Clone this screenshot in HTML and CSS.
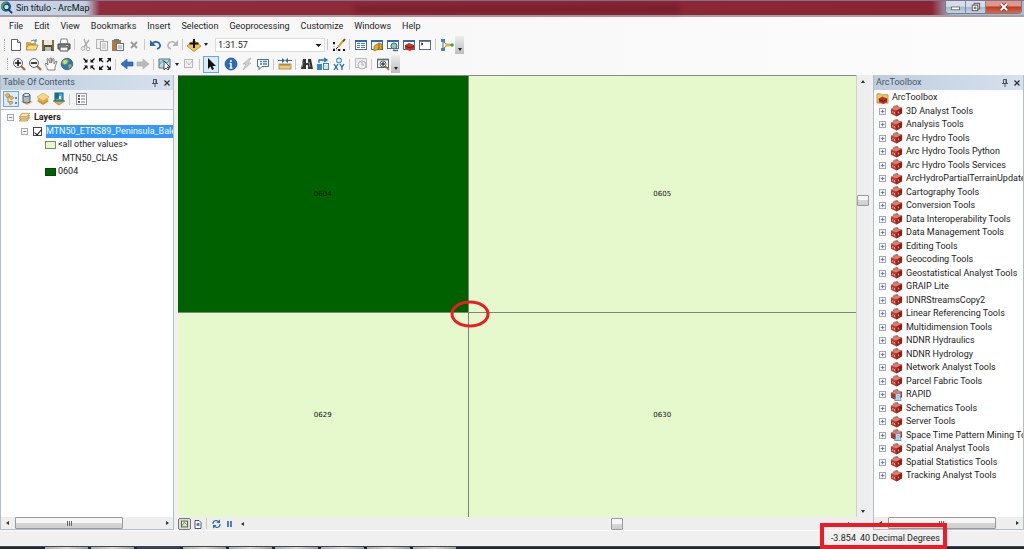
FILE: index.html
```
<!DOCTYPE html>
<html lang="en">
<head>
    <meta charset="UTF-8">
    <meta name="viewport" content="width=device-width, initial-scale=1.0">
    <title>Sin título - ArcMap</title>
    <link rel="stylesheet" href="styles.css">
</head>
<body>
    <svg class="defs">
        <symbol id="toolbox" viewBox="0 0 14 13">
            <path d="M1 4L7 1L13 3V9L7 12.500L1 9.500Z" fill="#c23a2d"/>
            <path d="M1 4L7 1L13 3L7 6Z" fill="#e07c69"/>
            <path d="M7 6L13 3V9L7 12.500Z" fill="#9c2119"/>
            <path d="M1 6.500L7 8.500L13 5.500" stroke="#6d1914" stroke-width=".8" fill="none"/>
            <path d="M4 3V1.500L8 .5V2" stroke="#555" stroke-width=".8" fill="none"/>
            <path d="M3 6.500v2M5 7.500v2M9 7v2" stroke="#f1c9c0"/>
        </symbol>
        <symbol id="script-box" viewBox="0 0 14 13">
            <path d="M1 4L7 1L13 3V9L7 12.500L1 9.500Z" fill="#b5342a"/>
            <path d="M1 4L7 1L13 3L7 6Z" fill="#e07c69"/>
            <path d="M4 3V1.500L8 .5V2" stroke="#555" stroke-width=".8" fill="none"/>
            <path d="M6 5h6l-1 3l1 4.500H5l1-3Z" fill="#d6eafa" stroke="#3c86c4" stroke-width=".8"/>
            <path d="M7 7h3M7 9h3M7 11h3" stroke="#5c9ed4" stroke-width=".8"/>
        </symbol>
        <symbol id="pin" viewBox="0 0 8 8">
            <path d="M2.500 .5h3v4M2.500 .5v4M1 4.500h6M4 5v3M5 1v3" stroke="#444" stroke-width=".9" fill="none"/>
        </symbol>
        <symbol id="cross" viewBox="0 0 8 8">
            <path d="M1.500 1.500L6.500 6.500M6.500 1.500L1.500 6.500" stroke="#333" stroke-width="1.300"/>
        </symbol>
        <symbol id="layers" viewBox="0 0 14 14">
            <path d="M1 9L7 6L13 9L7 13Z" fill="#c98f2b"/>
            <path d="M1 7L7 4L13 7L7 11Z" fill="#e3b04a"/>
            <path d="M1 5L7 1L13 5L7 9Z" fill="#f8d98a" stroke="#c9973c" stroke-width=".6"/>
        </symbol>
        <symbol id="group" viewBox="0 0 14 14">
            <path d="M1 10.500l3-4h9l-3 4Z" fill="#f5d692" stroke="#a9792a" stroke-width=".8"/>
            <path d="M1 8l3-4h9l-3 4Z" fill="#f5d692" stroke="#a9792a" stroke-width=".8"/>
            <path d="M1 5.500l3-4h9l-3 4Z" fill="#fbe7b6" stroke="#a9792a" stroke-width=".8"/>
        </symbol>
    </svg>

    <header class="titlebar">
        <svg class="app-icon" viewBox="0 0 14 14"><circle cx="6.500" cy="6" r="5.500" fill="#1d6b9e"/><path d="M2 3l4-2 2 3-3 1 1 3-2 2-3-4Z" fill="#58a84b"/><circle cx="7" cy="6.500" r="3" fill="#bfe4f5" stroke="#123b58" stroke-width="1.200"/><path d="M9 9l4 4" stroke="#123b58" stroke-width="2"/></svg>
        <h1>Sin título - ArcMap</h1>
        <span class="behind"></span>
        <div class="win-buttons">
            <button aria-label="Minimize"><svg viewBox="0 0 20 13"><rect x="5.500" y="6.500" width="9" height="3" fill="#fff" stroke="#555" stroke-width=".8"/></svg></button>
            <button aria-label="Restore"><svg viewBox="0 0 20 13"><rect x="8.500" y="2.500" width="6" height="6" fill="#ddd" stroke="#555"/><rect x="6.500" y="4.500" width="6" height="6" fill="#fff" stroke="#555"/><rect x="8.500" y="6.500" width="2" height="2" fill="#8aa4bb" stroke="#555" stroke-width=".6"/></svg></button>
            <button class="win-close" aria-label="Close"><svg viewBox="0 0 34 13"><path d="M14 3l7 7M21 3l-7 7" stroke="#643030" stroke-width="3.800"/><path d="M14 3l7 7M21 3l-7 7" stroke="#fff" stroke-width="2.200"/></svg></button>
        </div>
    </header>

    <nav class="menu">
        <button>File</button>
        <button>Edit</button>
        <button>View</button>
        <button>Bookmarks</button>
        <button>Insert</button>
        <button>Selection</button>
        <button>Geoprocessing</button>
        <button>Customize</button>
        <button>Windows</button>
        <button>Help</button>
    </nav>

    <div class="toolbar">
        <span class="grip"></span>
        <button aria-label="New"><svg viewBox="0 0 14 14"><path d="M2.500 1.500h6l3 3v8h-9Z" fill="#fff" stroke="#5c6570"/><path d="M8.500 1.500v3h3" fill="#dde5ee" stroke="#5c6570"/></svg></button>
        <button aria-label="Open"><svg viewBox="0 0 14 14"><path d="M1 4h4l1 1h5v7H1Z" fill="#d9a93c"/><path d="M3 7h10l-2 5H1Z" fill="#fbdc83" stroke="#a97a1c" stroke-width=".8"/><path d="M6 3q3-2 5 0M11 1v3H9" fill="none" stroke="#2b8ac6"/></svg></button>
        <button aria-label="Save"><svg viewBox="0 0 14 14"><path d="M1 2h12v11H1Z" fill="#514a35"/><rect x="3" y="2" width="8" height="5" fill="#ece9da"/><rect x="4" y="9" width="6" height="4" fill="#b9bcc0"/><path d="M2 2v10M12 2v10" stroke="#b29432"/></svg></button>
        <button aria-label="Print"><svg viewBox="0 0 14 14"><path d="M4 1h6l1 5H3Z" fill="#fff" stroke="#666" stroke-width=".8"/><path d="M1 6h12v5H1Z" fill="#80858b" stroke="#444"/><path d="M3 9h8v4H3Z" fill="#f7f7f7" stroke="#555"/><path d="M9 7.500h2" stroke="#f1c232"/></svg></button>
        <span class="sep"></span>
        <button aria-label="Cut"><svg viewBox="0 0 14 14"><path d="M5 1l3 8M10 2L5 9" stroke="#aaa" stroke-width="1.400"/><circle cx="4" cy="10.500" r="1.800" fill="none" stroke="#aaa"/><circle cx="9" cy="11" r="1.800" fill="none" stroke="#aaa"/></svg></button>
        <button aria-label="Copy"><svg viewBox="0 0 14 14"><rect x="1.500" y="1.500" width="7" height="9" fill="#eee" stroke="#b5b5b5"/><rect x="5.500" y="3.500" width="7" height="9" fill="#f4f4f4" stroke="#a8a8a8"/><path d="M7 6h4M7 8h4M7 10h4" stroke="#b5b5b5"/></svg></button>
        <button aria-label="Paste"><svg viewBox="0 0 14 14"><rect x="1" y="2" width="9" height="11" fill="#b7773b"/><rect x="3" y="1" width="5" height="3" fill="#777"/><rect x="5.500" y="5.500" width="7" height="7" fill="#fff" stroke="#5f7185"/><path d="M7 8h4M7 10h4" stroke="#7f9dbb"/></svg></button>
        <button aria-label="Delete"><svg viewBox="0 0 14 14"><path d="M4 4l6 6M10 4l-6 6" stroke="#9a9a9a" stroke-width="1.800"/></svg></button>
        <span class="sep"></span>
        <button aria-label="Undo"><svg viewBox="0 0 14 14"><path d="M3 6q3-4 7-1q3 4-2 6" fill="none" stroke="#2a64b4" stroke-width="1.800"/><path d="M1 2v6h6Z" fill="#2a64b4"/></svg></button>
        <button aria-label="Redo"><svg viewBox="0 0 14 14"><path d="M11 6q-3-4-7-1q-3 4 2 6" fill="none" stroke="#b5b5b5" stroke-width="1.600"/><path d="M13 2v6H7Z" fill="#b5b5b5"/></svg></button>
        <span class="sep"></span>
        <button aria-label="Add data"><svg viewBox="0 0 14 14"><path d="M0 8L7 2.500L14 8L7 13.500Z" fill="#f0c153" stroke="#a87620" stroke-width=".7"/><path d="M7 1v9M2.500 5.500h9" stroke="#111" stroke-width="2"/></svg></button>
        <button class="drop" aria-label="Add data options"></button>
        <select class="scale" aria-label="Map scale"><option>1:31.57</option></select>
        <span class="sep"></span>
        <button aria-label="Editor"><svg viewBox="0 0 14 14"><path d="M2 6v6h8" fill="none" stroke="#888" stroke-dasharray="1 1"/><path d="M1 4h2v2H1ZM1 11h2v2H1ZM6 11h2v2H6ZM11 11h2v2h-2Z" fill="#111"/><path d="M6 9L11 3" stroke="#d5a03a" stroke-width="2"/><path d="M11 3.500l2-2.500" stroke="#7b3a22" stroke-width="2"/><path d="M4 11l2-2" stroke="#222"/></svg></button>
        <span class="sep"></span>
        <button aria-label="Table of contents"><svg viewBox="0 0 14 14"><rect x="1.500" y="2.500" width="11" height="9" fill="#fff" stroke="#566c85"/><path d="M1 3h12" stroke="#2e69b0" stroke-width="2"/><path d="M3 5.500h3M3 7.500h3M3 9.500h3M7 5.500h4M7 7.500h4M7 9.500h4" stroke="#4480c0"/></svg></button>
        <button aria-label="Catalog"><svg viewBox="0 0 14 14"><rect x="1.500" y="2.500" width="11" height="9" fill="#f5f5f5" stroke="#566c85"/><path d="M1 3h12" stroke="#2e69b0" stroke-width="2"/><path d="M4 8l5-3v6l-5 2ZM9 5l3 1v5l-3 1Z" fill="#e2ab25" stroke="#896310" stroke-width=".6"/></svg></button>
        <button aria-label="Search"><svg viewBox="0 0 14 14"><rect x="1.500" y="2.500" width="11" height="8" fill="#fff" stroke="#566c85"/><path d="M1 3h12" stroke="#2e69b0" stroke-width="2"/><circle cx="8" cy="8" r="3" fill="#8cc7b8" stroke="#31659a"/><path d="M7 12.500h5" stroke="#536779" stroke-width="1.400"/></svg></button>
        <button aria-label="ArcToolbox"><svg viewBox="0 0 14 14"><rect x="1.500" y="2.500" width="11" height="9" fill="#fff" stroke="#566c85"/><path d="M1 3h12" stroke="#2e69b0" stroke-width="2"/><path d="M3 7l4-2 5 2v4l-4 2-5-2Z" fill="#c63328"/><path d="M3 8l5 2 4-2" stroke="#781713" fill="none"/></svg></button>
        <button aria-label="Python"><svg viewBox="0 0 14 14"><rect x="1.500" y="2.500" width="11" height="9" fill="#fff" stroke="#566c85"/><path d="M1 3h12" stroke="#4c6175" stroke-width="1.600"/><path d="M3 5l2 1-2 1" stroke="#222" fill="none"/></svg></button>
        <span class="sep"></span>
        <button aria-label="ModelBuilder"><svg viewBox="0 0 14 14"><path d="M3 3v8M3 3l4 4M3 11l4-4h5" fill="none" stroke="#666"/><rect x="1" y="1" width="4" height="3" fill="#3b86cb"/><rect x="1" y="10" width="4" height="3" fill="#3b86cb"/><rect x="5.500" y="5.500" width="4" height="3" fill="#dfb62b"/><circle cx="12" cy="7" r="1.800" fill="#48a23d"/></svg></button>
        <button class="overflow" aria-label="Toolbar options"></button>
    </div>

    <div class="toolbar tools">
        <span class="grip"></span>
        <button aria-label="Zoom in"><svg viewBox="0 0 14 14"><path d="M9 9l4 4" stroke="#a56f3a" stroke-width="2.400"/><circle cx="6" cy="6" r="4.500" fill="#f4f6f8" stroke="#666"/><path d="M6 3v6M3 6h6" stroke="#111" stroke-width="1.600"/></svg></button>
        <button aria-label="Zoom out"><svg viewBox="0 0 14 14"><path d="M9 9l4 4" stroke="#a56f3a" stroke-width="2.400"/><circle cx="6" cy="6" r="4.500" fill="#f4f6f8" stroke="#666"/><path d="M3 6h6" stroke="#111" stroke-width="1.600"/></svg></button>
        <button aria-label="Pan"><svg viewBox="0 0 14 14"><path d="M4 13L1 7l1-1 2 2L3 2l1-.5L6 6V1h1.500v5L9 1.500l1 .5v5l2-3 1 .5L11 10v3Z" fill="#fff" stroke="#666" stroke-width=".8"/></svg></button>
        <button aria-label="Full extent"><svg viewBox="0 0 14 14"><circle cx="7" cy="7" r="5.800" fill="#2f74bd" stroke="#294666" stroke-width=".6"/><path d="M3 3l4-1 2 2-2 3-3 1-2-2ZM8 8l3-1 1 2-3 3Z" fill="#8bb943"/><circle cx="5" cy="5" r="2" fill="#f7f6a6" opacity=".6"/></svg></button>
        <span class="sep blank"></span>
        <button aria-label="Fixed zoom in"><svg viewBox="0 0 14 14"><path d="M1.500 1.500l3 3M12.500 1.500l-3 3M1.500 12.500l3-3M12.500 12.500l-3-3" stroke="#111" stroke-width="1.400"/><path d="M5.500 2v3.500H2ZM8.500 2v3.500H12ZM5.500 12V8.500H2ZM8.500 12V8.500H12Z" fill="#111"/></svg></button>
        <button aria-label="Fixed zoom out"><svg viewBox="0 0 14 14"><path d="M2 2l3 3M12 2L9 5M2 12l3-3M12 12l-3-3" stroke="#111" stroke-width="1.400"/><path d="M1 1h4L1 5ZM13 1H9l4 4ZM1 13h4L1 9ZM13 13H9l4-4Z" fill="#111"/></svg></button>
        <span class="sep"></span>
        <button aria-label="Back"><svg viewBox="0 0 14 14"><path d="M1 7l6-5v3h6v4H7v3Z" fill="#2f73c4" stroke="#1e5295" stroke-width=".6"/></svg></button>
        <button aria-label="Forward"><svg viewBox="0 0 14 14"><path d="M13 7L7 2v3H1v4h6v3Z" fill="#bbb" stroke="#aaa" stroke-width=".6"/></svg></button>
        <span class="sep"></span>
        <button aria-label="Select features"><svg viewBox="0 0 14 14"><path d="M1 2h11v9H1Z" fill="#b9dce5" stroke="#58707e"/><path d="M1 8l4-5 4 3 3-4" stroke="#4794a7" fill="none"/><path d="M6 4v9l2-2 2 2 1-1-2-2h3Z" fill="#fff" stroke="#222" stroke-width=".8"/></svg></button>
        <button class="drop" aria-label="Selection options"></button>
        <button aria-label="Clear selection"><svg viewBox="0 0 14 14"><rect x="2.500" y="2.500" width="8" height="8" fill="#f0f0f0" stroke="#b8b8b8"/><path d="M4 4l3 4 3-4" stroke="#bbb" fill="none"/></svg></button>
        <span class="sep"></span>
        <button class="active" aria-label="Select elements"><svg viewBox="0 0 14 14"><path d="M4 1v11l2.500-2.500L8 13l2-1-1.500-3H12Z" fill="#111"/></svg></button>
        <button class="after-active" aria-label="Identify"><svg viewBox="0 0 14 14"><circle cx="7" cy="7" r="6" fill="#2b6cba" stroke="#1c4983" stroke-width=".7"/><path d="M7 3v2M7 6v5M5.500 6.500H7M5.500 11h3" stroke="#fff" stroke-width="1.500"/></svg></button>
        <button aria-label="Hyperlink"><svg viewBox="0 0 14 14"><path d="M10 1L3 7h3l-3 6 8-7H8l3-5Z" fill="#d0d0d0" stroke="#b0b0b0" stroke-width=".7"/></svg></button>
        <button aria-label="HTML popup"><svg viewBox="0 0 14 14"><path d="M1.500 2.500h11v7H6l-3 3v-3H1.500Z" fill="#fff" stroke="#4b6c82"/><path d="M4 4.500h2M7 4.500h4M4 7h2M7 7h4" stroke="#2e8bc3" stroke-width="1.400"/></svg></button>
        <span class="sep"></span>
        <button aria-label="Measure"><svg viewBox="0 0 14 14"><rect x="1" y="7" width="12" height="5" fill="#f0cc78" stroke="#9c7227" stroke-width=".7"/><path d="M3 7v2M5 7v2M7 7v2M9 7v2M11 7v2" stroke="#765216" stroke-width=".7"/><path d="M0 3.500h5M9 3.500h5" stroke="#246bb1"/><path d="M4 1l3 2.500L4 6ZM10 1L7 3.500 10 6Z" fill="#246bb1"/></svg></button>
        <span class="sep"></span>
        <button aria-label="Find"><svg viewBox="0 0 14 14"><path d="M3 2h3v4h2V2h3l2 10H8V8H6v4H1Z" fill="#333"/><path d="M3 5L2 10M9 5l1 5" stroke="#999"/></svg></button>
        <button aria-label="Find route"><svg viewBox="0 0 14 14"><rect x="1" y="7" width="5" height="6" fill="#3c88c7"/><rect x="7.500" y="6.500" width="5" height="6" fill="#fff" stroke="#3c88c7"/><path d="M8 9h4M8 11h4" stroke="#8ab9dd" stroke-width=".8"/><path d="M3 6V3h7M8 1l3 2-3 2" fill="none" stroke="#2571b5" stroke-width="1.300"/></svg></button>
        <button aria-label="Go to XY"><svg viewBox="0 0 14 14"><circle cx="7" cy="3.500" r="2.500" fill="#d5ecfa" stroke="#2c77b5"/><path d="M2 7l4 6M6 7l-4 6M8 7l2 3 2-3M10 10v3" stroke="#1e67a8" stroke-width="1.300" fill="none"/></svg></button>
        <span class="sep"></span>
        <button aria-label="Time slider"><svg viewBox="0 0 14 14"><rect x="1.500" y="1.500" width="11" height="9" fill="#eee" stroke="#bbb"/><circle cx="8" cy="8" r="4" fill="#f2f2f2" stroke="#b0b0b0"/><path d="M8 5v3h2" stroke="#aaa" fill="none"/></svg></button>
        <span class="sep"></span>
        <button aria-label="Viewer window"><svg viewBox="0 0 14 14"><rect x="1.500" y="2.500" width="11" height="8" fill="#eef3f6" stroke="#536779"/><path d="M1 2.500h12" stroke="#536779" stroke-width="1.600"/><circle cx="7" cy="7" r="3" fill="#fff" stroke="#444" stroke-width=".8"/><path d="M9 9l4 4" stroke="#9b6839" stroke-width="1.600"/><path d="M7 5v4M5 7h4" stroke="#111"/></svg></button>
        <button class="overflow" aria-label="Toolbar options"></button>
    </div>

    <main class="workspace">
        <aside class="panel toc">
            <div class="panel-head">
                <h2>Table Of Contents</h2>
                <button aria-label="Auto hide"><svg><use href="#pin"/></svg></button>
                <button aria-label="Close"><svg><use href="#cross"/></svg></button>
            </div>
            <div class="toc-tools">
                <button class="active" aria-label="List by drawing order"><svg viewBox="0 0 14 14"><path d="M4 4v6h4M4 4h3" stroke="#888" fill="none"/><path d="M1 3l3-2 2 2-3 3ZM5 5l3-1 2 2-3 2ZM5 10l3-1 1 2-3 2Z" fill="#edb64a" stroke="#a9771f" stroke-width=".5"/><path d="M11 6h2M11 11h2" stroke="#2c70b6" stroke-width="1.500"/></svg></button>
                <button aria-label="List by source"><svg viewBox="0 0 14 14"><path d="M1 10l6-2 6 2-6 3Z" fill="#edb64a"/><path d="M3 3v7q4 2 7 0V3Z" fill="#a9b9cb" stroke="#4c5c6f"/><ellipse cx="6.500" cy="3" rx="3.500" ry="1.500" fill="#e7edf4" stroke="#4c5c6f"/></svg></button>
                <button aria-label="List by visibility"><svg><use href="#layers"/></svg></button>
                <button aria-label="List by selection"><svg viewBox="0 0 14 14"><path d="M1 9l6-3 6 3-6 4Z" fill="#e3ad43" stroke="#9c6b20" stroke-width=".6"/><rect x="3" y="1" width="8" height="8" fill="#38b6d6" stroke="#175b78"/><path d="M3 1h4v5l-4 2Z" fill="#176b92"/><path d="M7 4h2v3H7Z" fill="#fff"/></svg></button>
                <span class="sep"></span>
                <button aria-label="Options"><svg viewBox="0 0 14 14"><rect x="2.500" y="1.500" width="10" height="11" fill="#fff" stroke="#8c98a4"/><path d="M4 4h2M4 7h2M4 10h2" stroke="#222" stroke-width="1.600"/><path d="M7 4h4M7 7h4M7 10h4" stroke="#777"/></svg></button>
            </div>
            <ul class="tree toc-tree">
                <li><button class="twist" aria-label="Collapse">−</button><svg class="node"><use href="#group"/></svg><b>Layers</b></li>
                <li class="level-1"><button class="twist" aria-label="Collapse">−</button><input type="checkbox" id="mtn50" checked><label for="mtn50">MTN50_ETRS89_Peninsula_Bale</label></li>
                <li class="level-2"><span class="swatch"></span>&lt;all other values&gt;</li>
                <li class="level-3">MTN50_CLAS</li>
                <li class="level-2"><span class="swatch dark"></span>0604</li>
            </ul>
            <div class="hscroll">
                <button class="left" aria-label="Scroll left"></button>
                <div class="track"><span class="thumb"></span></div>
                <button class="right" aria-label="Scroll right"></button>
            </div>
        </aside>

        <section class="view">
            <div class="map">
                <div class="sheet selected">0604
                    <svg class="mark" viewBox="0 0 40 28"><ellipse cx="20" cy="14" rx="18" ry="12" fill="none" stroke="#ed1c24" stroke-width="3"/></svg>
                </div>
                <div class="sheet">0605</div>
                <div class="sheet">0629</div>
                <div class="sheet">0630</div>
            </div>
            <div class="vscroll">
                <button class="up" aria-label="Scroll up"></button>
                <div class="track"><span class="thumb"></span></div>
                <button class="down" aria-label="Scroll down"></button>
            </div>
            <div class="view-bar">
                <button class="pressed" aria-label="Data view"><svg viewBox="0 0 12 12"><rect x="2.500" y="2.500" width="7" height="7" fill="#e8edc0" stroke="#444"/><path d="M3 8l3-4 3 3" stroke="#3a8b4b" fill="none"/></svg></button>
                <button aria-label="Layout view"><svg viewBox="0 0 12 12"><path d="M3.500 2.500h4l2 2v6h-6Z" fill="#fff" stroke="#556"/><rect x="5" y="5" width="3" height="3" fill="#4a87bd"/></svg></button>
                <span class="sep"></span>
                <button aria-label="Refresh"><svg viewBox="0 0 12 12"><path d="M2.500 6q0-3.500 3.500-3.500l2 1M9.500 6q0 3.500-3.500 3.500L4 8.500" fill="none" stroke="#2463ae" stroke-width="1.200"/><path d="M9.500 1.500v3.500H6ZM2.500 10.500V7H6Z" fill="#2463ae"/></svg></button>
                <button aria-label="Pause"><svg viewBox="0 0 12 12"><path d="M4.500 3v6M7.500 3v6" stroke="#2463ae" stroke-width="1.600"/></svg></button>
                <div class="hscroll">
                    <button class="left" aria-label="Scroll left"></button>
                    <div class="track"><span class="thumb"></span></div>
                    <button class="right" aria-label="Scroll right"></button>
                </div>
            </div>
        </section>

        <aside class="panel toolbox">
            <div class="panel-head">
                <h2>ArcToolbox</h2>
                <button aria-label="Auto hide"><svg><use href="#pin"/></svg></button>
                <button aria-label="Close"><svg><use href="#cross"/></svg></button>
            </div>
            <ul class="tree tools-tree">
                <li class="root"><svg class="node" viewBox="0 0 14 13"><path d="M1 2h4l1 1h7v9H1Z" fill="#edcc66" stroke="#a78228" stroke-width=".8"/><path d="M3 7l4-2 5 2v4l-4 2-5-2Z" fill="#bd3023"/><path d="M3 8l5 2 4-2" stroke="#641410" fill="none"/></svg>ArcToolbox</li>
                <li><button class="twist" aria-label="Expand">+</button><svg class="node"><use href="#toolbox"/></svg>3D Analyst Tools</li>
                <li><button class="twist" aria-label="Expand">+</button><svg class="node"><use href="#toolbox"/></svg>Analysis Tools</li>
                <li><button class="twist" aria-label="Expand">+</button><svg class="node"><use href="#toolbox"/></svg>Arc Hydro Tools</li>
                <li><button class="twist" aria-label="Expand">+</button><svg class="node"><use href="#toolbox"/></svg>Arc Hydro Tools Python</li>
                <li><button class="twist" aria-label="Expand">+</button><svg class="node"><use href="#toolbox"/></svg>Arc Hydro Tools Services</li>
                <li><button class="twist" aria-label="Expand">+</button><svg class="node"><use href="#toolbox"/></svg>ArcHydroPartialTerrainUpdate</li>
                <li><button class="twist" aria-label="Expand">+</button><svg class="node"><use href="#toolbox"/></svg>Cartography Tools</li>
                <li><button class="twist" aria-label="Expand">+</button><svg class="node"><use href="#toolbox"/></svg>Conversion Tools</li>
                <li><button class="twist" aria-label="Expand">+</button><svg class="node"><use href="#toolbox"/></svg>Data Interoperability Tools</li>
                <li><button class="twist" aria-label="Expand">+</button><svg class="node"><use href="#toolbox"/></svg>Data Management Tools</li>
                <li><button class="twist" aria-label="Expand">+</button><svg class="node"><use href="#toolbox"/></svg>Editing Tools</li>
                <li><button class="twist" aria-label="Expand">+</button><svg class="node"><use href="#toolbox"/></svg>Geocoding Tools</li>
                <li><button class="twist" aria-label="Expand">+</button><svg class="node"><use href="#toolbox"/></svg>Geostatistical Analyst Tools</li>
                <li><button class="twist" aria-label="Expand">+</button><svg class="node"><use href="#toolbox"/></svg>GRAIP Lite</li>
                <li><button class="twist" aria-label="Expand">+</button><svg class="node"><use href="#toolbox"/></svg>IDNRStreamsCopy2</li>
                <li><button class="twist" aria-label="Expand">+</button><svg class="node"><use href="#toolbox"/></svg>Linear Referencing Tools</li>
                <li><button class="twist" aria-label="Expand">+</button><svg class="node"><use href="#toolbox"/></svg>Multidimension Tools</li>
                <li><button class="twist" aria-label="Expand">+</button><svg class="node"><use href="#toolbox"/></svg>NDNR Hydraulics</li>
                <li><button class="twist" aria-label="Expand">+</button><svg class="node"><use href="#toolbox"/></svg>NDNR Hydrology</li>
                <li><button class="twist" aria-label="Expand">+</button><svg class="node"><use href="#toolbox"/></svg>Network Analyst Tools</li>
                <li><button class="twist" aria-label="Expand">+</button><svg class="node"><use href="#toolbox"/></svg>Parcel Fabric Tools</li>
                <li><button class="twist" aria-label="Expand">+</button><svg class="node"><use href="#script-box"/></svg>RAPID</li>
                <li><button class="twist" aria-label="Expand">+</button><svg class="node"><use href="#toolbox"/></svg>Schematics Tools</li>
                <li><button class="twist" aria-label="Expand">+</button><svg class="node"><use href="#toolbox"/></svg>Server Tools</li>
                <li><button class="twist" aria-label="Expand">+</button><svg class="node"><use href="#script-box"/></svg>Space Time Pattern Mining To</li>
                <li><button class="twist" aria-label="Expand">+</button><svg class="node"><use href="#toolbox"/></svg>Spatial Analyst Tools</li>
                <li><button class="twist" aria-label="Expand">+</button><svg class="node"><use href="#toolbox"/></svg>Spatial Statistics Tools</li>
                <li><button class="twist" aria-label="Expand">+</button><svg class="node"><use href="#toolbox"/></svg>Tracking Analyst Tools</li>
            </ul>
            <div class="hscroll">
                <button class="left" aria-label="Scroll left"></button>
                <div class="track"><span class="thumb"></span></div>
                <button class="right" aria-label="Scroll right"></button>
            </div>
        </aside>
    </main>

    <footer class="status">
        <div class="coords"><span>-3.854</span><span>40 Decimal Degrees</span></div>
    </footer>
    <div class="taskbar">
        <span class="start"></span>
        <span class="task"></span>
        <span class="task"></span>
        <span class="task off"></span>
        <span class="task"></span>
        <span class="task"></span>
        <span class="task"></span>
        <span class="task"></span>
        <span class="task"></span>
        <span class="task"></span>
    </div>
</body>
</html>
```

FILE: styles.css
```
* {
    box-sizing: border-box;
}
body {
    margin: 0;
    height: 100vh;
    display: flex;
    flex-direction: column;
    overflow: hidden;
    background-color: #f0f0f0;
    color: #1c1c1c;
    font-family: Roboto, "Open Sans", sans-serif;
    font-size: 9px;
    line-height: 13px;
}
button {
    padding: 0;
    border: none;
    background: none;
    color: inherit;
    font: inherit;
    flex: none;
}
svg {
    display: block;
}
.defs {
    position: absolute;
    width: 0;
    height: 0;
}

/* title bar */
.titlebar {
    flex: none;
    height: 17px;
    display: flex;
    align-items: flex-start;
    background: linear-gradient(90deg, #c9d8ea 0, #c0d0e2 86px, #8f2d3c 100px, #8b2432 91%, #a9bcd2 93%);
    border-top: 1px solid #85708e;
    border-bottom: 2px solid #a79da3;
}
.app-icon {
    width: 13px;
    height: 13px;
}
.titlebar h1 {
    margin: 0 0 0 3px;
    font-size: 9px;
    line-height: 14px;
    font-weight: 400;
    color: #111;
}
/* another window's caption showing through the glass */
.behind {
    width: 326px;
    height: 6px;
    margin: 5px 0 0 auto;
    background-color: #5f1522;
    filter: blur(3px);
    opacity: 0.6;
}
.win-buttons {
    display: flex;
    margin: 0 2px 0 265px;
    border: 1px solid #6d7c8c;
    border-top: none;
    border-radius: 0 0 4px 4px;
    overflow: hidden;
}
.win-buttons button {
    width: 20px;
    height: 12px;
    background: linear-gradient(#d3deea 45%, #a5b9cc 50%, #c5d5e4);
    border-right: 1px solid #7d8c9c;
}
.win-buttons svg {
    width: 100%;
    height: 12px;
}
.win-buttons .win-close {
    width: 35px;
    border: none;
    background: linear-gradient(#dd9a8c 40%, #bf3a24 50%, #d9694a);
}

/* menu and toolbars */
.menu {
    flex: none;
    height: 18px;
    display: flex;
    align-items: center;
    gap: 11px;
    padding-left: 9px;
    background: linear-gradient(90deg, #f5f5f5, #fcfcfc);
}
.toolbar {
    flex: none;
    height: 19px;
    display: flex;
    align-items: center;
    padding-left: 4px;
    background: linear-gradient(90deg, #f5f5f5, #fcfcfc);
}
.toolbar.tools {
    height: 21px;
    padding: 0 0 1px 7px;
}
.toolbar button {
    width: 16px;
    height: 17px;
    display: flex;
    align-items: center;
    justify-content: center;
}
.toolbar svg,
.toc-tools svg {
    width: 14px;
    height: 14px;
    flex: none;
}
.grip {
    width: 2px;
    height: 12px;
    margin-right: 2px;
    border-left: 1px dotted #aaa;
}
.sep {
    flex: none;
    width: 1px;
    height: 11px;
    margin: 0 3px 0 2px;
    background-color: #c9c9c9;
}
.sep.blank {
    visibility: hidden;
}
.toolbar .drop {
    width: 8px;
}
.drop::after,
.overflow::after {
    content: "";
    border: 2px solid transparent;
    border-top: 3px solid #222;
    border-bottom: none;
}
.toolbar .overflow {
    width: 9px;
    height: 18px;
    align-items: flex-end;
    padding-bottom: 3px;
    background: linear-gradient(#ededed, #bdbdbd);
}
.toolbar .active,
.toc-tools .active {
    border: 1px solid #66a7e8;
    background-color: #ddeaf8;
}
.toolbar .after-active {
    margin-left: 4px;
}
.scale {
    width: 110px;
    height: 14px;
    margin-left: 5px;
    padding: 0 2px;
    border: 1px solid #dcdcdc;
    border-radius: 0;
    appearance: none;
    background: linear-gradient(#222, #222) no-repeat right 5px top 5px / 1px 3px,
        linear-gradient(#222, #222) no-repeat right 4px top 5px / 3px 2px,
        linear-gradient(#222, #222) no-repeat right 3px top 5px / 5px 1px, #fff;
    color: inherit;
    font: inherit;
    line-height: 12px;
}

/* docked panels */
.workspace {
    flex: 1;
    min-height: 0;
    display: flex;
    gap: 4px;
}
.panel {
    flex: none;
    display: flex;
    flex-direction: column;
    border: 1px solid #b4bcc8;
    border-top: none;
    min-height: 0;
}
.toc {
    width: 174px;
}
.toolbox {
    width: 151px;
}
.panel-head {
    flex: none;
    height: 15px;
    display: flex;
    align-items: center;
    gap: 4px;
    padding: 0 2px;
    background: linear-gradient(90deg, #bfcddd, #d5e1ef);
}
.panel-head h2 {
    flex: 1;
    margin: 0;
    font-size: 9px;
    font-weight: 400;
    color: #46566a;
}
.panel-head svg {
    width: 8px;
    height: 8px;
}
.toc-tools {
    flex: none;
    height: 20px;
    display: flex;
    align-items: center;
    padding: 0 0 1px 2px;
    background-color: #f3f4f6;
    border-bottom: 1px solid #b8bec6;
}
.toc-tools button {
    width: 16px;
    height: 16px;
    display: flex;
    align-items: center;
    justify-content: center;
}
.tree {
    flex: 1;
    min-height: 0;
    margin: 0;
    padding: 1px 0 0;
    list-style: none;
    background-color: #fff;
    overflow: hidden;
    white-space: nowrap;
}
.tree li {
    height: 13px;
    display: flex;
    align-items: center;
}
.tree li:nth-child(even) {
    height: 14px;
}
.tools-tree li {
    padding-left: 5px;
}
.tools-tree .root {
    padding-left: 2px;
}
.twist {
    width: 7px;
    height: 7px;
    margin-right: 4px;
    border: 1px solid #a3abb5;
    background-color: #f8f8f8;
    color: #2b4e93;
    font-size: 8px;
    line-height: 5px;
}
.node {
    flex: none;
    width: 13px;
    height: 12px;
    margin-right: 3px;
}
.toc-tree {
    padding-left: 6px;
}
.toc-tree .level-1 {
    padding-left: 14px;
}
.toc-tree .level-2 {
    padding-left: 38px;
}
.toc-tree .level-3 {
    padding-left: 55px;
}
.tree input {
    flex: none;
    width: 9px;
    height: 9px;
    margin: 0 4px 0 1px;
    appearance: none;
    border: 1px solid #444;
    background-color: #fff;
}
.tree input:checked::after {
    content: "";
    display: block;
    width: 3px;
    height: 6px;
    margin: 0 auto;
    border: solid #111;
    border-width: 0 1px 1px 0;
    transform: rotate(40deg);
}
.tree label {
    flex: 1;
    overflow: hidden;
    background-color: #3399ff;
    color: #fff;
}
.swatch {
    width: 11px;
    height: 8px;
    margin-right: 2px;
    border: 1px solid #7d8a6c;
    background-color: #e6f9cd;
}
.swatch.dark {
    background-color: #006100;
    border-color: #00480a;
}

/* scroll bars */
.hscroll {
    flex: none;
    height: 12px;
    display: flex;
    background-color: #eee;
}
.vscroll {
    display: flex;
    flex-direction: column;
    background-color: #eee;
    border-left: 1px solid #d0d0d0;
}
.hscroll button,
.vscroll button {
    width: 12px;
    height: 12px;
    display: flex;
    align-items: center;
    justify-content: center;
}
.hscroll button::after,
.vscroll button::after {
    content: "";
    border: 2px solid transparent;
}
.hscroll .left::after {
    border-right: 3px solid #333;
    border-left: none;
}
.hscroll .right::after {
    border-left: 3px solid #333;
    border-right: none;
}
.vscroll .up::after {
    border-bottom: 3px solid #333;
    border-top: none;
}
.vscroll .down::after {
    border-top: 3px solid #333;
    border-bottom: none;
}
.track {
    flex: 1;
    display: flex;
}
.thumb {
    border: 1px solid #9a9a9a;
    border-radius: 1px;
    background: linear-gradient(#f6f6f6 45%, #d6d6d6 50%, #cfcfcf);
}
.panel .thumb {
    width: 73%;
    margin-left: 2px;
    display: flex;
    align-items: center;
    justify-content: center;
}
.panel .thumb::after {
    content: "";
    width: 5px;
    height: 5px;
    background: repeating-linear-gradient(90deg, #666 0 1px, transparent 1px 2px);
}
.toolbox .thumb {
    width: 86%;
}
.vscroll .track {
    flex-direction: column;
}
.vscroll .thumb {
    height: 11px;
    margin-top: 108px;
}
.view .hscroll {
    flex: 1;
}
.view .hscroll .thumb {
    width: 12px;
    margin-left: 61%;
}

/* map */
.view {
    flex: 1;
    min-width: 0;
    display: grid;
    grid-template-columns: 1fr 13px;
    grid-template-rows: 1fr 13px;
}
.map {
    display: grid;
    grid-template-columns: 3fr 4fr;
    grid-template-rows: 7fr 6fr;
    background-color: #e6f9cd;
    border-top: 1px solid #8a8a8a;
}
.sheet {
    position: relative;
    display: flex;
    align-items: center;
    justify-content: center;
    border-right: 1px solid #7c8672;
    border-bottom: 1px solid #7c8672;
    font-family: "DejaVu Sans", sans-serif;
    font-size: 7px;
    color: #111;
}
.sheet:nth-child(even) {
    border-right: none;
}
.sheet:nth-child(n + 3) {
    border-bottom: none;
}
.sheet.selected {
    background-color: #006100;
    color: #001c00;
}
.mark {
    position: absolute;
    right: -22px;
    bottom: -16px;
    width: 40px;
    height: 28px;
    z-index: 1;
}
.view-bar {
    grid-column: 1 / -1;
    display: flex;
    align-items: center;
    padding-right: 14px;
    background-color: #eee;
}
.view-bar > button {
    width: 13px;
    height: 12px;
}
.view-bar > .pressed {
    border: 1px solid #777;
    border-radius: 2px;
    background-color: #ddd;
}
.view-bar > button svg {
    width: 100%;
    height: 100%;
}

/* status bar and the sliver of taskbar below it */
.status {
    flex: none;
    height: 16px;
    display: flex;
    justify-content: flex-end;
    align-items: center;
    padding-right: 84px;
    border-top: 1px solid #fafafa;
}
.coords {
    position: relative;
    display: flex;
    gap: 4px;
    line-height: 15px;
}
.coords::after {
    content: "";
    position: absolute;
    inset: -8px -7px -3px -11px;
    border: 4px solid #ed1c24;
    z-index: 2;
}
.taskbar {
    flex: none;
    height: 3px;
    display: flex;
    gap: 3px;
    background-color: #1d2733;
    border-top: 1px solid #3c4b59;
}
.start {
    width: 42px;
}
.task {
    width: 43px;
    background: linear-gradient(90deg, #aaa, #d5d5d5, #999);
}
.task.off {
    background: #34434f;
}
```
